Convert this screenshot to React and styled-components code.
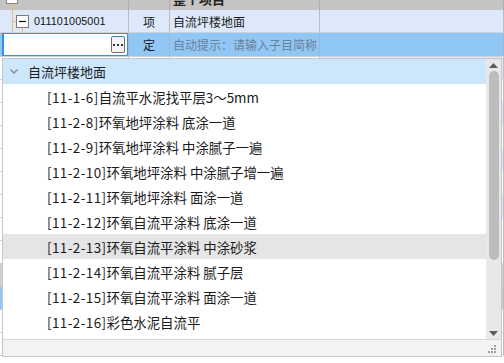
import React from 'react';
import styled, { createGlobalStyle } from 'styled-components';

const Global = createGlobalStyle`
  html, body { margin: 0; padding: 0; background: #fff; }
  body { font-family: "Noto Sans CJK SC", "Noto Sans", sans-serif; }
  * { box-sizing: border-box; }
`;

const Page = styled.div`
  position: relative;
  width: 504px;
  height: 363px;
  overflow: hidden;
  background: #fff;
`;

const Row = styled.div`
  display: grid;
  grid-template-columns: 129px 41px 150px 184px;
  height: ${p => p.$h}px;
  background: ${p => p.$bg || '#fff'};
  border-bottom: ${p => (p.$noBorder ? 'none' : '1px solid #c9d3e0')};
`;

const Cell = styled.div`
  position: relative;
  display: flex;
  align-items: center;
  justify-content: ${p => (p.$center ? 'center' : 'flex-start')};
  padding-left: ${p => p.$pl || 0}px;
  border-right: 1px solid ${p => p.$line || '#bdbdbd'};
  background: ${p => p.$bg || 'transparent'};
  overflow: hidden;
  font-size: 12px;
  color: #1a1a1a;
  white-space: nowrap;
`;

const HeaderText = styled.span`
  display: block;
  margin-top: -12px;
  font-size: 13px;
  font-weight: bold;
  color: #222;
  line-height: 14px;
`;

const CheckBox = styled.span`
  position: absolute;
  left: 6px;
  top: -8px;
  width: 12px;
  height: 12px;
  background: #fff;
  border: 1px solid #8a8a8a;
`;

const TreeSvg = styled.svg`
  position: absolute;
  left: 0;
  top: 0;
`;

const Code = styled.span`
  font-family: "Liberation Sans", Arial, sans-serif;
  font-size: 10.8px;
  color: #111;
  margin-left: 34px;
  letter-spacing: 0.1px;
`;

const Editor = styled.div`
  position: relative;
  flex: 1;
  height: 100%;
  margin-left: 2px;
  background: #fff;
  border: 1px solid #3a8ee6;
  border-left-width: 2px;
  display: flex;
  align-items: center;
  justify-content: flex-end;
  padding-right: 2px;
`;

const DotsButton = styled.span`
  width: 14px;
  height: 17px;
  border: 1px solid #6f6f6f;
  border-radius: 2px;
  background: #f4f4f4;
  display: flex;
  align-items: center;
  justify-content: center;
  gap: 2px;
  & > i {
    width: 2px;
    height: 2px;
    background: #333;
    display: block;
  }
`;

const Hint = styled.span`
  color: #6b8196;
  font-size: 12px;
`;

const Popup = styled.div`
  position: absolute;
  left: 2px;
  top: 58px;
  width: 500px;
  height: 299px;
  border: 1px solid #c6c6c6;
  background: #fff;
  display: flex;
  flex-direction: column;
`;

const Body = styled.div`
  display: flex;
  height: 280px;
`;

const List = styled.div`
  flex: 1;
  display: flex;
  flex-direction: column;
`;

const GroupHeader = styled.div`
  height: 25px;
  background: #cce6fc;
  display: flex;
  align-items: center;
  padding-left: 7px;
  gap: 10px;
  font-size: 13px;
  color: #1f1f1f;
`;

const Item = styled.div`
  height: 25px;
  display: flex;
  align-items: center;
  padding-left: 44px;
  font-size: 13.4px;
  color: #1a1a1a;
  background: ${p => (p.$active ? '#e5e5e5' : 'transparent')};
  white-space: pre;
`;

const ItemCode = styled.span`
  letter-spacing: 0.45px;
`;

const Scrollbar = styled.div`
  width: 15px;
  background: #e8e8e8;
  display: flex;
  flex-direction: column;
  align-items: center;
  padding: 4px 0 3px;
`;

const Arrow = styled.svg`
  flex: none;
`;

const Track = styled.div`
  flex: 1;
  width: 100%;
  display: flex;
  flex-direction: column;
  align-items: center;
  padding-top: 3px;
`;

const Thumb = styled.div`
  width: 10px;
  height: 189px;
  border-radius: 5px;
  background: #bcbcbc;
`;

const Footer = styled.div`
  height: 17px;
  border-top: 1px solid #d6d6d6;
  background: #f3f3f3;
  display: flex;
  justify-content: flex-end;
  align-items: flex-end;
  padding: 0 4px 2px 0;
`;

const items = [
  ['[11-1-6]', '自流平水泥找平层3～5mm'],
  ['[11-2-8]', '环氧地坪涂料 底涂一道'],
  ['[11-2-9]', '环氧地坪涂料 中涂腻子一遍'],
  ['[11-2-10]', '环氧地坪涂料 中涂腻子增一遍'],
  ['[11-2-11]', '环氧地坪涂料 面涂一道'],
  ['[11-2-12]', '环氧自流平涂料 底涂一道'],
  ['[11-2-13]', '环氧自流平涂料 中涂砂浆'],
  ['[11-2-14]', '环氧自流平涂料 腻子层'],
  ['[11-2-15]', '环氧自流平涂料 面涂一道'],
  ['[11-2-16]', '彩色水泥自流平'],
];

const bgRows = [
  { bg: '#fff', last: '#dde9fb' },
  { bg: '#fff', last: '#fff' },
  { bg: '#fff', last: '#dde9fb' },
  { bg: '#fff', last: '#fff' },
  { bg: '#fff', last: '#dde9fb' },
  { bg: '#fff', last: '#fff' },
  { bg: '#fff', last: '#dde9fb' },
  { bg: '#fff', last: '#fff' },
  { bg: '#fff', last: '#fff' },
  { bg: '#d0d0d0', last: '#d0d0d0' },
  { bg: '#91c7f5', last: '#c8c8c8' },
  { bg: '#fff', last: '#fff' },
  { bg: '#fff', last: '#fff' },
];

export default function App() {
  return (
    <Page>
      <Global />
      <Row $h={10} $bg="#c4c4c4" $noBorder>
        <Cell $line="#b0b0b0" style={{ overflow: 'visible' }}>
          <CheckBox />
          <TreeSvg width="20" height="10">
            <line x1="12.5" y1="4" x2="12.5" y2="10" stroke="#f7b867" strokeWidth="1" />
          </TreeSvg>
        </Cell>
        <Cell $line="#b0b0b0" />
        <Cell $line="#b0b0b0" $pl={3}>
          <HeaderText>整个项目</HeaderText>
        </Cell>
        <Cell $line="#b0b0b0" />
      </Row>
      <Row $h={23} $bg="#dde9fb">
        <Cell>
          <TreeSvg width="40" height="23">
            <line x1="12.5" y1="0" x2="12.5" y2="23" stroke="#f7b867" />
            <line x1="12" y1="11.5" x2="16" y2="11.5" stroke="#f7b867" />
            <line x1="22.5" y1="18" x2="22.5" y2="23" stroke="#f7b867" />
            <rect x="16.5" y="5.5" width="12" height="12" fill="#fff" stroke="#7b7b7b" />
            <line x1="19" y1="11.5" x2="26" y2="11.5" stroke="#111" strokeWidth="1.2" />
          </TreeSvg>
          <Code>011101005001</Code>
        </Cell>
        <Cell $center>项</Cell>
        <Cell $pl={3}>自流坪楼地面</Cell>
        <Cell />
      </Row>
      <Row $h={24} $bg="#91c7f5">
        <Cell $line="#9cb6cf">
          <Editor>
            <DotsButton>
              <i />
              <i />
              <i />
            </DotsButton>
          </Editor>
        </Cell>
        <Cell $center $line="#9cb6cf">定</Cell>
        <Cell $pl={3} $line="#9cb6cf">
          <Hint>自动提示：请输入子目简称</Hint>
        </Cell>
        <Cell $line="#9cb6cf" />
      </Row>
      {bgRows.map((r, i) => (
        <Row key={i} $h={23} $bg={r.bg}>
          <Cell />
          <Cell />
          <Cell />
          <Cell $bg={r.last} />
        </Row>
      ))}

      <Popup>
        <Body>
          <List>
            <GroupHeader>
              <svg width="8" height="5" viewBox="0 0 8 5">
                <polyline points="0.5,0.5 4,4 7.5,0.5" fill="none" stroke="#8a8a8a" strokeWidth="1.4" />
              </svg>
              <span>自流坪楼地面</span>
            </GroupHeader>
            {items.map(([code, name], i) => (
              <Item key={code} $active={i === 6}>
                <ItemCode>{code}</ItemCode>
                {name}
              </Item>
            ))}
          </List>
          <Scrollbar>
            <Arrow width="9" height="5" viewBox="0 0 9 5">
              <polygon points="0,5 4.5,0 9,5" fill="#5c5c5c" />
            </Arrow>
            <Track>
              <Thumb />
            </Track>
            <Arrow width="9" height="5" viewBox="0 0 9 5">
              <polygon points="0,0 4.5,5 9,0" fill="#5c5c5c" />
            </Arrow>
          </Scrollbar>
        </Body>
        <Footer>
          <svg width="10" height="10" viewBox="0 0 10 10">
            <rect x="7" y="1" width="2" height="2" fill="#a0a0a0" />
            <rect x="4" y="4" width="2" height="2" fill="#a0a0a0" />
            <rect x="7" y="4" width="2" height="2" fill="#a0a0a0" />
            <rect x="1" y="7" width="2" height="2" fill="#a0a0a0" />
            <rect x="4" y="7" width="2" height="2" fill="#a0a0a0" />
            <rect x="7" y="7" width="2" height="2" fill="#a0a0a0" />
          </svg>
        </Footer>
      </Popup>
    </Page>
  );
}
